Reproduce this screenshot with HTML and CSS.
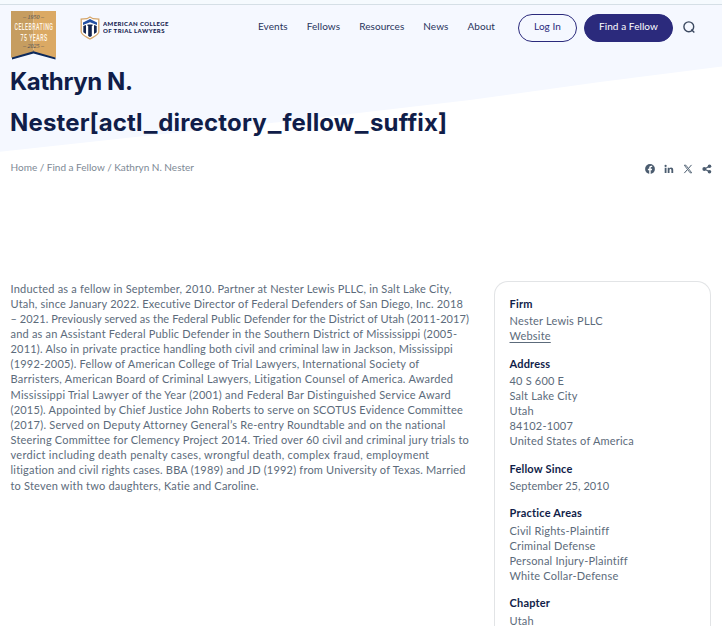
FILE: index.html
```html
<!DOCTYPE html>
<html lang="en">
<head>
    <meta charset="UTF-8">
    <meta name="viewport" content="width=device-width, initial-scale=1.0">
    <title>Kathryn N. Nester - American College of Trial Lawyers</title>
    <link rel="stylesheet" href="styles.css">
</head>
<body>
    <svg class="hero-bg" viewBox="0 0 722 152" aria-hidden="true">
        <path d="M0 0H722V66.5L600 82L470 100L290 121L140 136.5L0 151.7Z" fill="#f5f8ff"/>
    </svg>
    <div class="topbar"></div>

    <header class="header">
        <svg class="ribbon" width="46" height="50" viewBox="0 0 46 50">
            <path d="M1 45.500L22.500 39L44.500 45.500V48.500L22.500 42.500L1 48.500Z" fill="#0d2a5c"/>
            <path d="M0 0H22.500V40.200L0 46.700Z" fill="#c69d60"/>
            <path d="M22.500 0H45V46.700L22.500 40.200Z" fill="#dba964"/>
            <text class="ribbon-year" x="22.500" y="8" text-anchor="middle">– 1950 –</text>
            <text class="ribbon-text" transform="translate(3.500 19.300) scale(.62 1)" textLength="62" lengthAdjust="spacing">CELEBRATING</text>
            <text class="ribbon-text" transform="translate(9.500 29.500) scale(.62 1)" textLength="43" lengthAdjust="spacing">75 YEARS</text>
            <text class="ribbon-year" x="22.500" y="37" text-anchor="middle">– 2025 –</text>
        </svg>

        <a class="logo" href="#">
            <svg width="20" height="24" viewBox="0 0 20 24">
                <path d="M10 1L13 2.700L18.800 3.200V16C18.300 19 14 20.500 10 23C6 20.500 1.700 19 1.200 16V3.200L7 2.700Z" fill="#fff" stroke="#d5a66b" stroke-width="1.300"/>
                <path d="M3 6.500L10 3L17 6.500V9L10 6.200L3 9Z" fill="#2450a4"/>
                <path d="M3.300 10L6 9V18L3.300 16.300ZM7.500 8.500H12.500V10H11.800V20L10 21L8.200 20V10H7.500ZM14 9L16.700 10V16.300L14 18Z" fill="#132550"/>
            </svg>
            <svg class="logo-text" width="66" height="16" viewBox="0 0 66 16">
                <text x="0" y="6" textLength="65.500" lengthAdjust="spacing">AMERICAN COLLEGE</text>
                <text x="0" y="13" textLength="61.500" lengthAdjust="spacing">OF TRIAL LAWYERS</text>
            </svg>
        </a>

        <nav class="nav">
            <a href="#">Events</a>
            <a href="#">Fellows</a>
            <a href="#">Resources</a>
            <a href="#">News</a>
            <a href="#">About</a>
        </nav>

        <a class="btn btn-outline" href="#">Log In</a>
        <a class="btn btn-primary" href="#">Find a Fellow</a>
        <svg class="search" width="12" height="12" viewBox="0 0 12 12" fill="none" stroke="#3b4960" stroke-width="1.400">
            <circle cx="5.800" cy="5.800" r="4.900"/>
            <path d="M8.300 8.500L11.300 11.400"/>
        </svg>
    </header>

    <h1><span class="first">Kathryn N.</span><br>Nester[actl<span class="us">_</span>directory<span class="us">_</span>fellow<span class="us">_</span>suffix]</h1>

    <div class="meta">
        <div class="breadcrumbs"><a href="#">Home</a> / <a href="#">Find a Fellow</a> / Kathryn N. Nester</div>
        <div class="share">
            <svg width="10" height="10" viewBox="0 0 10 10">
                <circle cx="5" cy="5" r="4.900" fill="#4b5c6f"/>
                <path d="M4.200 10V6.300H2.900V4.800H4.200V3.800C4.200 2.400 5 1.700 6.200 1.700L7.200 1.800V3H6.500C5.900 3 5.700 3.400 5.700 3.800V4.800H7.100L6.900 6.300H5.700V10Z" fill="#fff"/>
            </svg>
            <svg width="10" height="10" viewBox="0 0 10 10" fill="#4b5c6f">
                <circle cx="1.600" cy="1.900" r="1.100"/>
                <path d="M.7 3.700H2.500V9H.7ZM3.700 3.700H5.400V4.400C6.400 3 9.200 3.300 9.200 5.800V9H7.400V6.200C7.400 4.600 5.500 4.700 5.500 6.200V9H3.700Z"/>
            </svg>
            <svg width="10" height="10" viewBox="0 0 10 10" fill="none" stroke="#4b5c6f">
                <path d="M1.300 1.200H2.900L8.700 8.800H7.100Z" stroke-width=".9"/>
                <path d="M8.500 .9L5.500 4.400M4.400 5.600L1.300 9.100" stroke-width="1"/>
            </svg>
            <svg width="10" height="10" viewBox="0 0 10 10" fill="#4b5c6f">
                <path d="M2.400 5L7.600 2.200M2.400 5L7.600 7.800" stroke="#4b5c6f" stroke-width="1.200"/>
                <circle cx="2.300" cy="5" r="1.900"/>
                <circle cx="7.500" cy="2.300" r="1.800"/>
                <circle cx="7.500" cy="7.700" r="1.800"/>
            </svg>
        </div>
    </div>

    <main class="content">
        <p class="bio">
            Inducted as a fellow in September, 2010. Partner at Nester Lewis PLLC, in Salt Lake City,<br>
            Utah, since January 2022. Executive Director of Federal Defenders of San Diego, Inc. 2018<br>
            <span class="tight">– 2021. Previously served as the Federal Public Defender for the District of Utah (2011-2017)</span><br>
            and as an Assistant Federal Public Defender in the Southern District of Mississippi (2005-<br>
            2011). Also in private practice handling both civil and criminal law in Jackson, Mississippi<br>
            (1992-2005). Fellow of American College of Trial Lawyers, International Society of<br>
            <span class="wide">Barristers, American Board of Criminal Lawyers, Litigation Counsel of America. Awarded</span><br>
            <span class="wide">Mississippi Trial Lawyer of the Year (2001) and Federal Bar Distinguished Service Award</span><br>
            (2015). Appointed by Chief Justice John Roberts to serve on SCOTUS Evidence Committee<br>
            <span class="wide">(2017). Served on Deputy Attorney General’s Re-entry Roundtable and on the national</span><br>
            Steering Committee for Clemency Project 2014. Tried over 60 civil and criminal jury trials to<br>
            <span class="wider">verdict including death penalty cases, wrongful death, complex fraud, employment</span><br>
            litigation and civil rights cases. BBA (1989) and JD (1992) from University of Texas. Married<br>
            to Steven with two daughters, Katie and Caroline.
        </p>

        <aside class="card">
            <h2>Firm</h2>
            <p>Nester Lewis PLLC<br><a href="#">Website</a></p>
            <h2>Address</h2>
            <p>40 S 600 E<br>Salt Lake City<br>Utah<br>84102-1007<br>United States of America</p>
            <h2>Fellow Since</h2>
            <p class="date">September 25, 2010</p>
            <h2>Practice Areas</h2>
            <p class="list">Civil Rights-Plaintiff<br>Criminal Defense<br>Personal Injury-Plaintiff<br>White Collar-Defense</p>
            <h2>Chapter</h2>
            <p class="list">Utah</p>
        </aside>
    </main>
</body>
</html>
```
FILE: styles.css
```css
* {
    box-sizing: border-box;
}
body {
    position: relative;
    margin: 0;
    height: 626px;
    overflow: hidden;
    font-family: Lato, "Liberation Sans", sans-serif;
    font-size: 11px;
    color: #5c6b7b;
    background-color: #fff;
}
a {
    color: inherit;
    text-decoration: none;
}
.hero-bg {
    position: absolute;
    top: 0;
    left: 0;
    width: 722px;
    height: 152px;
    z-index: -1;
}
.topbar {
    height: 5px;
    background-color: #f5fafe;
    border-bottom: 1px solid #d5dfe6;
}
.header {
    display: flex;
    align-items: flex-start;
    height: 56px;
    padding: 6px 0 0 11px;
}
.ribbon {
    margin-right: 23px;
}
.ribbon-year {
    font: italic 6px "Liberation Serif", serif;
    fill: #4a4a55;
}
.ribbon-text {
    font: 500 8.500px Roboto, sans-serif;
    fill: #fff6e8;
}
.logo {
    display: flex;
    width: 178px;
    padding-top: 5px;
}
.logo-text {
    margin: 4px 0 0 3px;
    font: 900 6px Lato, sans-serif;
    fill: #152451;
}
.nav {
    display: flex;
    gap: 19px;
    width: 260px;
    padding-top: 7px;
    font-size: 10px;
    line-height: 16px;
    letter-spacing: 0.07px;
    color: #29345c;
}
.btn {
    height: 28px;
    margin-top: 3px;
    border: 1px solid #2b2a7c;
    border-radius: 14px;
    font-size: 10px;
    line-height: 23px;
    letter-spacing: 0.07px;
    text-align: center;
}
.btn-outline {
    width: 59px;
    margin-right: 7px;
    color: #2b2a7c;
}
.btn-primary {
    width: 89px;
    color: #fff;
    background-color: #2b2a7c;
}
.search {
    margin: 10px 0 0 10px;
}
h1 {
    margin: 0 0 0 10px;
    font-family: Inter, sans-serif;
    font-size: 24px;
    font-weight: 700;
    line-height: 41px;
    letter-spacing: 0.15px;
    color: #101d49;
}
.first {
    letter-spacing: -0.4px;
}
.us {
    display: inline-block;
    margin: 0 2px;
    transform: scaleX(1.2);
}
.meta {
    display: flex;
    justify-content: space-between;
    height: 138px;
    padding: 17px 10px 0 10.500px;
}
.breadcrumbs {
    margin-top: -1px;
    font-size: 10px;
    line-height: 16px;
    color: #7d8995;
}
.share {
    display: flex;
    gap: 9px;
    padding-top: 4px;
}
.content {
    display: grid;
    grid-template-columns: 460.500px 217px;
    gap: 23px;
    padding-left: 10.500px;
}
.bio {
    margin: -0.500px 0 0;
    line-height: 15.150px;
    letter-spacing: 0.2px;
    white-space: nowrap;
}
.tight {
    letter-spacing: 0.08px;
}
.wide {
    letter-spacing: 0.25px;
}
.wider {
    letter-spacing: 0.3px;
}
.card {
    height: 345px;
    overflow: hidden;
    padding: 14px 14.500px 0;
    border: 1px solid #e2e4e6;
    border-bottom: none;
    border-radius: 14px 14px 0 0;
    letter-spacing: 0.2px;
}
.card h2 {
    margin: 0;
    font-size: 11px;
    line-height: 16px;
    color: #101d49;
}
.card p {
    margin: 1px 0 13px;
    line-height: 15px;
}
.card .date {
    margin-bottom: 12px;
    letter-spacing: 0.05px;
}
.card .list {
    margin: 2px 0 12px;
}
.card a {
    text-decoration: underline;
    text-underline-offset: 2px;
}
```
